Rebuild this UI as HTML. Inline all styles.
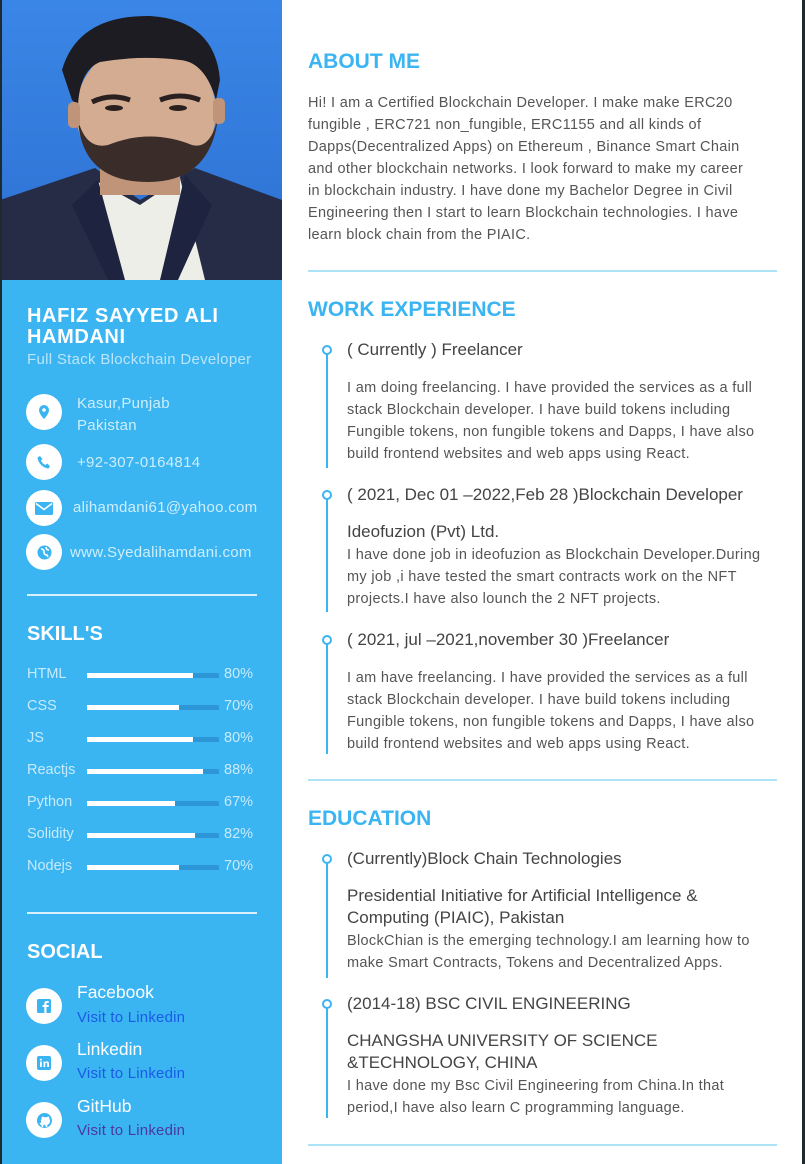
<!DOCTYPE html>
<html><head><meta charset="utf-8"><style>
*{margin:0;padding:0;box-sizing:border-box}
body{width:805px;height:1164px;overflow:hidden;background:#fff;font-family:"Liberation Sans",sans-serif;position:relative}
.a{position:absolute;white-space:nowrap}
#side{position:absolute;left:0;top:0;width:282px;height:1164px;background:#3bb4f2}
#ledge{position:absolute;left:0;top:0;width:2px;height:1164px;background:#1d2a30}
#redge{position:absolute;right:0;top:0;width:3px;height:1164px;background:#1d2a30}
.h{color:#3bb4f2;font-weight:bold;font-size:21px}
.sh{color:#fff;font-weight:bold;font-size:20px}
.t{color:#555;font-size:14.5px;line-height:22px;letter-spacing:.32px}
.tt{color:#444;font-size:17px}
.hr{position:absolute;left:308px;width:469px;height:2px;background:#aee3f7}
.dot{position:absolute;left:322px;width:10px;height:10px;border:2px solid #3bb4f2;border-radius:50%;background:#fff}
.ln{position:absolute;left:326px;width:2px;background:#3bb4f2}
.c{position:absolute;left:26px;width:36px;height:36px;border-radius:50%;background:#fff;display:flex;align-items:center;justify-content:center}
.ct{color:#cdeefc;font-size:15px;letter-spacing:.3px}
.sk{color:#c7ebfc;font-size:14.5px}
.bar{position:absolute;left:87px;width:132px;height:5px;background:#2d96d6}
.bar i{display:block;height:5px;background:#fff}
.shr{position:absolute;left:27px;width:230px;height:2px;background:#d8f1fc}
</style></head><body>
<div id="side"></div>
<svg class="a" style="left:0;top:0" width="282" height="280" viewBox="0 0 282 280">
<defs><linearGradient id="bg" x1="0" y1="0" x2="0" y2="1"><stop offset="0" stop-color="#3a86e6"/><stop offset="1" stop-color="#2c70d2"/></linearGradient></defs>
<rect width="282" height="280" fill="url(#bg)"/>
<path d="M0 200 L95 168 L140 200 L195 168 L282 200 L282 280 L0 280Z" fill="#262c46"/>
<path d="M98 182 L140 205 L180 178 L205 280 L112 280Z" fill="#eeeee8"/>
<path d="M98 180 L125 280 L108 280 L72 205Z" fill="#1e2440"/>
<path d="M185 175 L160 280 L178 280 L212 205Z" fill="#1e2440"/>
<rect x="100" y="150" width="80" height="45" fill="#c09478"/>
<ellipse cx="146" cy="112" rx="70" ry="70" fill="#d4ac92"/>
<path d="M78 120 Q82 182 148 182 Q210 182 218 118 Q210 150 192 145 Q150 128 108 145 Q86 150 78 120Z" fill="#3a2c28"/>
<path d="M62 70 Q78 15 150 16 Q215 20 220 80 L216 100 Q205 62 180 60 Q140 55 100 62 Q80 70 78 105 L72 100 Z" fill="#1c1c22"/>
<path d="M92 102 Q110 93 130 100 M160 100 Q180 92 200 100" stroke="#2a2020" stroke-width="5" fill="none"/>
<ellipse cx="114" cy="108" rx="9" ry="3" fill="#2a2020"/><ellipse cx="178" cy="108" rx="9" ry="3" fill="#2a2020"/>
<rect x="68" y="102" width="12" height="26" rx="5" fill="#c09478"/>
<rect x="213" y="98" width="12" height="26" rx="5" fill="#c09478"/>
</svg>
<div id="ledge"></div><div id="redge"></div>

<div class="a sh" style="left:27px;top:306px;line-height:21px;letter-spacing:.6px">HAFIZ SAYYED ALI<br>HAMDANI</div>
<div class="a" style="left:27px;top:351px;font-size:15px;letter-spacing:.3px;color:#b9e6fb">Full Stack Blockchain Developer</div>

<div class="c" style="top:394px"><svg width="14" height="16" viewBox="0 0 14 16"><path d="M7 1a5 5 0 0 0-5 5c0 4 5 9 5 9s5-5 5-9a5 5 0 0 0-5-5z" fill="#3bb4f2"/><circle cx="7" cy="6" r="1.8" fill="#fff"/></svg></div>
<div class="a ct" style="left:77px;top:393px;line-height:22px">Kasur,Punjab<br>Pakistan</div>
<div class="c" style="top:444px"><svg width="14" height="14" viewBox="0 0 14 14"><path d="M3 1l2.5 3-1.5 1.5c.8 2 2.5 3.7 4.5 4.5L10 8.5l3 2.5-1.5 2.5C6 13 1 8 .5 2.5Z" fill="#3bb4f2"/></svg></div>
<div class="a ct" style="left:77px;top:454px">+92-307-0164814</div>
<div class="c" style="top:490px"><svg width="18" height="13" viewBox="0 0 18 13"><rect width="18" height="13" rx="1.5" fill="#3bb4f2"/><path d="M1 1.5l8 6 8-6" stroke="#fff" stroke-width="1.5" fill="none"/></svg></div>
<div class="a ct" style="left:73px;top:499px">alihamdani61@yahoo.com</div>
<div class="c" style="top:534px"><svg width="15" height="15" viewBox="0 0 15 15"><circle cx="7.5" cy="7.5" r="7" fill="#3bb4f2"/><path d="M4 4q3 0 3 3t3 3l1 2M9 2q0 3 3 3" stroke="#fff" stroke-width="1.6" fill="none"/></svg></div>
<div class="a ct" style="left:70px;top:544px">www.Syedalihamdani.com</div>

<div class="shr" style="top:594px"></div>
<div class="a sh" style="left:27px;top:623px">SKILL'S</div>
<div class="a sk" style="left:27px;top:666px">HTML</div><div class="bar" style="top:673px"><i style="width:106px"></i></div><div class="a sk" style="left:224px;top:666px">80%</div>
<div class="a sk" style="left:27px;top:698px">CSS</div><div class="bar" style="top:705px"><i style="width:92px"></i></div><div class="a sk" style="left:224px;top:698px">70%</div>
<div class="a sk" style="left:27px;top:730px">JS</div><div class="bar" style="top:737px"><i style="width:106px"></i></div><div class="a sk" style="left:224px;top:730px">80%</div>
<div class="a sk" style="left:27px;top:762px">Reactjs</div><div class="bar" style="top:769px"><i style="width:116px"></i></div><div class="a sk" style="left:224px;top:762px">88%</div>
<div class="a sk" style="left:27px;top:794px">Python</div><div class="bar" style="top:801px"><i style="width:88px"></i></div><div class="a sk" style="left:224px;top:794px">67%</div>
<div class="a sk" style="left:27px;top:826px">Solidity</div><div class="bar" style="top:833px"><i style="width:108px"></i></div><div class="a sk" style="left:224px;top:826px">82%</div>
<div class="a sk" style="left:27px;top:858px">Nodejs</div><div class="bar" style="top:865px"><i style="width:92px"></i></div><div class="a sk" style="left:224px;top:858px">70%</div>

<div class="shr" style="top:912px"></div>
<div class="a sh" style="left:27px;top:941px">SOCIAL</div>
<div class="c" style="top:988px"><svg width="14" height="14" viewBox="0 0 14 14"><rect width="14" height="14" rx="1.5" fill="#3bb4f2"/><path d="M9.5 14V8h2l.3-2H9.5V4.8c0-.6.2-1 1-1h1.3V2H10c-2 0-2.7 1.2-2.7 2.8V6H5.5v2h1.8v6z" fill="#fff"/></svg></div>
<div class="a" style="left:77px;top:982px;font-size:17.5px;color:#fff">Facebook</div>
<div class="a" style="left:77px;top:1009px;font-size:15px;letter-spacing:.2px;color:#1a5be6">Visit to Linkedin</div>
<div class="c" style="top:1045px"><svg width="14" height="14" viewBox="0 0 14 14"><rect width="14" height="14" rx="2" fill="#3bb4f2"/><rect x="3" y="5.5" width="1.8" height="5.5" fill="#fff"/><circle cx="3.9" cy="3.6" r="1" fill="#fff"/><path d="M6.5 5.5h1.7v.9c.4-.7 1.1-1 1.9-1 1.3 0 1.9.8 1.9 2.3V11h-1.8V8c0-.8-.3-1.2-.9-1.2s-1 .4-1 1.2v3H6.5z" fill="#fff"/></svg></div>
<div class="a" style="left:77px;top:1039px;font-size:17.5px;color:#fff">Linkedin</div>
<div class="a" style="left:77px;top:1065px;font-size:15px;letter-spacing:.2px;color:#1a5be6">Visit to Linkedin</div>
<div class="c" style="top:1102px"><svg width="15" height="15" viewBox="0 0 15 15"><circle cx="7.5" cy="7.5" r="7.5" fill="#3bb4f2"/><path d="M5.5 14v-2.5c-1.5 0-2-1-2.3-1.5M9.5 14v-2.8c1.8-.3 2.8-1.3 2.8-3.2 0-.8-.3-1.4-.7-1.9.1-.6.1-1.2-.2-1.7-.6 0-1.2.3-1.7.7a6 6 0 0 0-2.4 0c-.5-.4-1.1-.7-1.7-.7-.3.5-.3 1.1-.2 1.7-.4.5-.7 1.1-.7 1.9 0 1.9 1 2.9 2.8 3.2" stroke="#fff" stroke-width="1.6" fill="#fff"/></svg></div>
<div class="a" style="left:77px;top:1096px;font-size:17.5px;color:#fff">GitHub</div>
<div class="a" style="left:77px;top:1122px;font-size:15px;letter-spacing:.2px;color:#4a3a9c">Visit to Linkedin</div>

<!-- right -->
<div class="a h" style="left:308px;top:50px">ABOUT ME</div>
<div class="a t" style="left:308px;top:92px">Hi! I am a Certified Blockchain Developer. I make make ERC20<br>fungible , ERC721 non_fungible, ERC1155 and all kinds of<br>Dapps(Decentralized Apps) on Ethereum , Binance Smart Chain<br>and other blockchain networks. I look forward to make my career<br>in blockchain industry. I have done my Bachelor Degree in Civil<br>Engineering then I start to learn Blockchain technologies. I have<br>learn block chain from the PIAIC.</div>
<div class="hr" style="top:270px"></div>

<div class="a h" style="left:308px;top:298px">WORK EXPERIENCE</div>
<div class="ln" style="top:350px;height:118px"></div><div class="dot" style="top:345px"></div>
<div class="a tt" style="left:347px;top:340px">( Currently ) Freelancer</div>
<div class="a t" style="left:347px;top:377px">I am doing freelancing. I have provided the services as a full<br>stack Blockchain developer. I have build tokens including<br>Fungible tokens, non fungible tokens and Dapps, I have also<br>build frontend websites and web apps using React.</div>

<div class="ln" style="top:495px;height:117px"></div><div class="dot" style="top:490px"></div>
<div class="a tt" style="left:347px;top:485px">( 2021, Dec 01 –2022,Feb 28 )Blockchain Developer</div>
<div class="a tt" style="left:347px;top:522px">Ideofuzion (Pvt) Ltd.</div>
<div class="a t" style="left:347px;top:544px">I have done job in ideofuzion as Blockchain Developer.During<br>my job ,i have tested the smart contracts work on the NFT<br>projects.I have also lounch the 2 NFT projects.</div>

<div class="ln" style="top:640px;height:114px"></div><div class="dot" style="top:635px"></div>
<div class="a tt" style="left:347px;top:630px">( 2021, jul –2021,november 30 )Freelancer</div>
<div class="a t" style="left:347px;top:667px">I am have freelancing. I have provided the services as a full<br>stack Blockchain developer. I have build tokens including<br>Fungible tokens, non fungible tokens and Dapps, I have also<br>build frontend websites and web apps using React.</div>
<div class="hr" style="top:779px"></div>

<div class="a h" style="left:308px;top:807px">EDUCATION</div>
<div class="ln" style="top:859px;height:119px"></div><div class="dot" style="top:854px"></div>
<div class="a tt" style="left:347px;top:849px">(Currently)Block Chain Technologies</div>
<div class="a tt" style="left:347px;top:885px;line-height:22px">Presidential Initiative for Artificial Intelligence &amp;<br>Computing (PIAIC), Pakistan</div>
<div class="a t" style="left:347px;top:930px">BlockChian is the emerging technology.I am learning how to<br>make Smart Contracts, Tokens and Decentralized Apps.</div>

<div class="ln" style="top:1004px;height:114px"></div><div class="dot" style="top:999px"></div>
<div class="a tt" style="left:347px;top:994px">(2014-18) BSC CIVIL ENGINEERING</div>
<div class="a tt" style="left:347px;top:1030px;line-height:22px">CHANGSHA UNIVERSITY OF SCIENCE<br>&amp;TECHNOLOGY, CHINA</div>
<div class="a t" style="left:347px;top:1075px">I have done my Bsc Civil Engineering from China.In that<br>period,I have also learn C programming language.</div>
<div class="hr" style="top:1144px"></div>
</body></html>
